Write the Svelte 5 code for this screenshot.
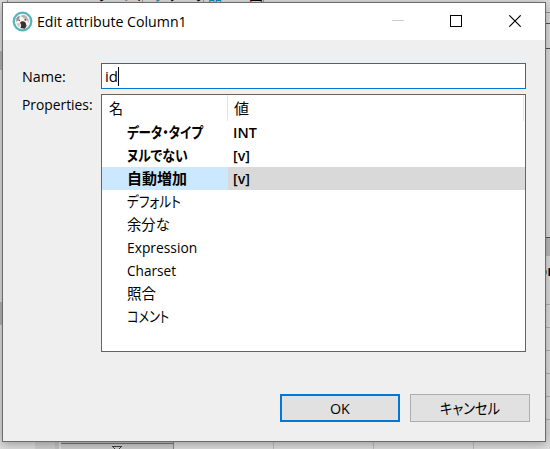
<script>
  const rows = [
    { name: 'データ・タイプ', width: 76, value: 'INT', valueWidth: 24, bold: true },
    { name: 'ヌルでない', width: 61, value: '[v]', valueWidth: 17, bold: true },
    { name: '自動増加', width: 60, value: '[v]', valueWidth: 17, bold: true, selected: true },
    { name: 'デフォルト', width: 54 },
    { name: '余分な', width: 43 },
    { name: 'Expression', width: 70 },
    { name: 'Charset', width: 49 },
    { name: '照合', width: 29 },
    { name: 'コメント', width: 42 }
  ];
  const gridLines = [304, 327, 350, 373, 396, 419];

  // Condenses a label horizontally to the given width.
  function fit(node, width) {
    node.style.transform = `scaleX(${width / node.offsetWidth})`;
    node.style.marginRight = `${width - node.offsetWidth}px`;
  }
</script>

<div class="screen">
  <div class="toolbar-tail">
    <span class="tool a">ータハント</span>
    <span class="tool b">グ</span>
    <span class="tool c">データ</span>
    <span class="tool d">品</span>
    <span class="tool e">ER 図</span>
    <i style="left:7px"></i><i style="left:142px"></i><i style="left:203px"></i><i style="left:263px"></i>
  </div>
  <div class="left-mark" style="top:51px;height:19px"></div>
  <div class="left-mark" style="top:302px;height:23px"></div>
  <div class="right-bar"></div>
  <div class="right-top"></div>
  <div class="right-mid"></div>
  <div class="peek">or</div>
  {#each gridLines as y}<div class="grid-line" style="top:{y}px"></div>{/each}
  <div class="bottom">
    <div class="gutter"></div>
    <div class="filter">
      <svg width="10" height="4" viewBox="0 0 10 4"><path d="M0 1.500H10M1 2L5 6L9 2" fill="none" stroke="#444" /></svg>
    </div>
    <div class="cells"></div>
  </div>

  <div class="dialog">
    <header>
      <svg class="logo" width="21" height="21" viewBox="0 0 21 21">
        <circle cx="10.500" cy="10.500" r="8.800" fill="#f7f5f3" stroke="#55b5bd" stroke-width="2.200" />
        <path d="M4.400 7.200Q6 4.700 8 5L7 8Q5.500 10.500 4.300 11Z" fill="#99918d" />
        <path d="M8.500 5Q11 3.200 14 4.800L16.500 8.500L16.800 12L14.800 9.200L12 7.200Z" fill="#b8b1ad" />
        <path d="M8 11.500Q10.500 9.200 13.500 11.500L14.600 15L12.800 17.700L8.500 17L9.200 14Z" fill="#3a302d" />
        <path d="M4.500 12.500L7.500 12L8 14.500L6.500 15.500Z" fill="#c9c3bf" />
        <circle cx="7.300" cy="9.200" r=".8" fill="#49413e" /><circle cx="13.300" cy="8.800" r=".9" fill="#49413e" />
      </svg>
      <h1><span use:fit={150}>Edit attribute Column1</span></h1>
      <svg class="controls" width="130" height="12" viewBox="0 0 130 12" fill="none" shape-rendering="crispEdges">
        <path d="M0 5.500H12" stroke="#ccc" />
        <path d="M58.500 .5H69.500V11.500H58.500Z" stroke="#000" />
        <path d="M117.300 .3L128.700 11.700M128.700 .3L117.300 11.700" stroke="#000" stroke-width="1.100" shape-rendering="auto" />
      </svg>
    </header>
    <main>
      <div class="field">
        <label for="name"><span use:fit={44}>Name:</span></label>
        <div class="input" id="name"><span use:fit={13}>id</span><b></b></div>
      </div>
      <div class="field props">
        <div class="label"><span use:fit={71}>Properties:</span></div>
        <div class="table">
          <div class="head">
            <div class="h1"><span use:fit={14}>名</span></div>
            <div class="h2"><span use:fit={15}>値</span></div>
          </div>
          {#each rows as r}
            <div class="row" class:bold={r.bold} class:selected={r.selected}>
              <div class="name"><span use:fit={r.width}>{r.name}</span></div>
              <div class="value">{#if r.value}<span use:fit={r.valueWidth}>{r.value}</span>{/if}</div>
            </div>
          {/each}
        </div>
      </div>
      <div class="buttons">
        <button class="default"><span use:fit={20}>OK</span></button>
        <button><span use:fit={60}>キャンセル</span></button>
      </div>
    </main>
  </div>
</div>

<style>
  :global(body) { overflow: hidden; }
  .screen {
    position: relative; width: 550px; height: 449px; overflow: hidden; background: #dedede;
    font: 15px/20px "Open Sans", "Noto Sans CJK JP", sans-serif; color: #000;
  }
  span { display: inline-block; white-space: nowrap; transform-origin: 0 50%; font-feature-settings: "palt"; }
  .dialog {
    position: absolute; left: 2px; top: 2px; width: 544px; height: 440px; box-sizing: border-box;
    border: 1px solid #6b6b6b; background: #efefef; box-shadow: 0 2px 10px rgba(0, 0, 0, .32);
    display: flex; flex-direction: column;
  }
  header { height: 37px; background: #fff; display: flex; align-items: center; flex: none; }
  .logo { margin: -1px 0 0 9px; }
  h1 { margin: 0 0 2px 4px; font: inherit; flex: 1; }
  .controls { margin: -1px 23px 0 0; }
  main { padding: 23px 15px 0 19px; }
  .field { display: flex; margin-right: 4px; }
  label, .label { width: 79px; flex: none; padding-top: 3px; height: 20px; }
  .label { padding-top: 0; }
  .input { flex: 1; height: 24px; border: 1px solid #0078d4; background: #fff; display: flex; align-items: center; padding-left: 3px; }
  .input b { width: 1px; height: 19px; background: #000; }
  .props { margin-top: 5px; }
  .table { flex: 1; height: 256px; border: 1px solid #646464; background: #fff; }
  .head { height: 26px; display: flex; border-right: 1px solid #e5e5e5; margin-right: 1px; line-height: 27px; }
  .h1 { width: 118px; padding-left: 7px; border-right: 1px solid #e5e5e5; }
  .h2 { padding-left: 6px; }
  .row { display: flex; height: 23px; line-height: 23px; }
  .name { width: 101px; padding-left: 25px; }
  .value { flex: 1; padding-left: 5px; }
  .bold { font-weight: 600; }
  .selected .name { background: #cce8ff; }
  .selected .value { background: #d9d9d9; }
  .buttons { display: flex; justify-content: flex-end; gap: 10px; margin-top: 42px; }
  button { width: 120px; height: 28px; padding: 0; border: 1px solid #adadad; background: #e1e1e1; font: inherit; color: #000; display: flex; align-items: center; justify-content: center; }
  .default { border: 2px solid #0078d7; }
  .toolbar-tail { position: absolute; left: 0; top: 0; width: 550px; height: 3px; overflow: hidden; }
  .toolbar-tail i { position: absolute; top: 0; width: 1px; height: 3px; background: #999; }
  .tool { position: absolute; top: -14px; line-height: 18px; font-size: 14px; }
  .a { left: 84px; } .b { left: 154px; color: #1687b5; } .c { left: 168px; } .d { left: 208px; color: #1687b5; } .e { left: 229px; }
  .left-mark { position: absolute; left: 0; width: 3px; background: #b5b5b5; }
  .right-bar { position: absolute; left: 546px; top: 12px; width: 4px; height: 10px; border-bottom: 1px solid #555; border-top: 1px solid #999; }
  .right-top { position: absolute; left: 546px; top: 24px; width: 4px; height: 24px; border-bottom: 1px solid #555; }
  .right-mid { position: absolute; left: 546px; top: 237px; width: 4px; height: 18px; border-top: 1px solid #555; background: #bbb; }
  .peek { position: absolute; left: 538px; top: 260px; font-weight: 600; }
  .grid-line { position: absolute; left: 546px; width: 4px; height: 1px; background: #b3b3b3; }
  .bottom { position: absolute; left: 0; top: 441px; width: 550px; height: 8px; display: flex; }
  .gutter { width: 24px; margin-left: 35px; background: #d0d0d0; box-shadow: inset -4px 0 #c4c4c4; }
  .filter { width: 112px; height: 8px; margin-left: 2px; border-right: 1px solid #888; background: linear-gradient(#c5c5c5 2px, #777 2px 3px, #cecece 3px); display: flex; justify-content: center; align-items: flex-end; }
  .cells { flex: 1; background: repeating-linear-gradient(90deg, transparent 0 99px, #bdbdbd 99px 100px); }
</style>
